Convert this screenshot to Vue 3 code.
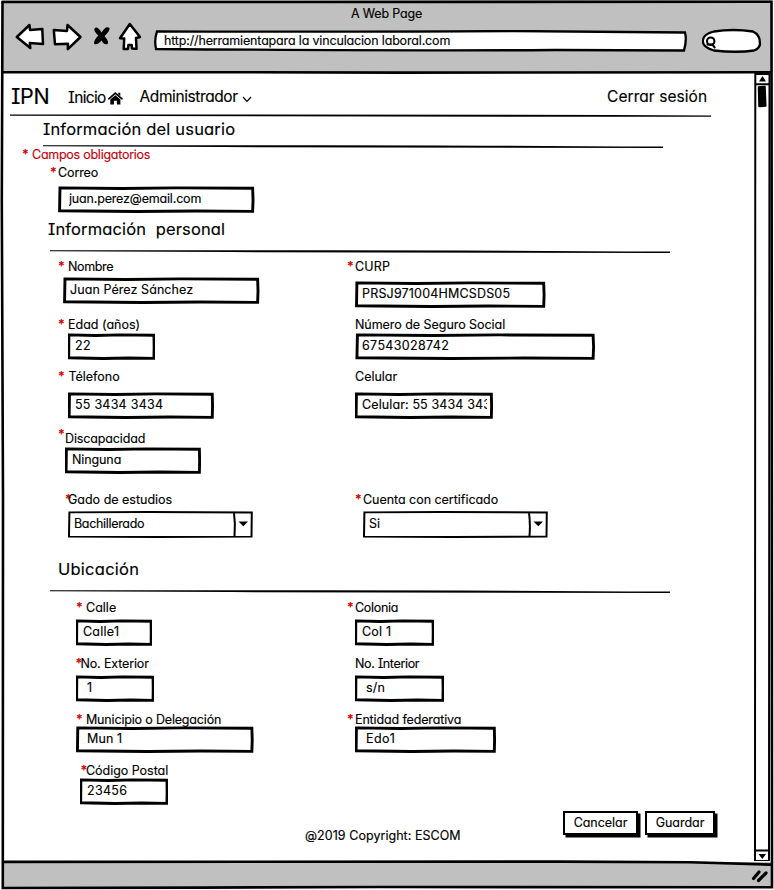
<script setup>
// Spreads letters so that a text takes a given width in the sketch.
const vFit = (el, { value }) => {
  if (!value) return
  el.style.letterSpacing = '0px'
  const count = el.textContent.length
  const natural = el.getBoundingClientRect().width
  el.style.letterSpacing = `${(value - 0.8 - natural) / count}px`
}

// x: left edge of the box, star / lx: offsets of the mark and label, all within the column
const sections = [
  {
    key: 'user', title: 'Información del usuario', titleWidth: 193, note: 'Campos obligatorios',
    rows: [
      { h: 51, fields: [{ label: 'Correo', star: 50, lx: 58, lw: 41, gap: 5, x: 57, w: 198, value: 'juan.perez@email.com', pad: 12, vw: 133 }] },
    ],
  },
  {
    key: 'personal', title: 'Información\u00a0 personal', titleWidth: 178,
    rows: [
      { h: 58, fields: [
        { label: 'Nombre', star: 58, lx: 68, lw: 46, gap: 2, x: 62, w: 198, value: 'Juan Pérez Sánchez', pad: 8, vw: 124 },
        { label: 'CURP', star: 7, lx: 15, lw: 36, gap: 6, x: 14, w: 192, value: 'PRSJ971004HMCSDS05', pad: 8, vw: 149 },
      ] },
      { h: 52, fields: [
        { label: 'Edad (años)', star: 58, lx: 68, lw: 73, gap: 0, x: 67, w: 88, value: '22', pad: 8, vw: 17 },
        { label: 'Número de Seguro Social', lx: 15, lw: 151, gap: 0, x: 14, w: 242, value: '67543028742', pad: 8, vw: 88 },
      ] },
      { h: 62, fields: [
        { label: 'Télefono', star: 58, lx: 68.5, lw: 52, gap: 7, x: 67, w: 147, value: '55 3434 3434', pad: 8, vw: 89 },
        { label: 'Celular', lx: 15, lw: 43, gap: 7, x: 14, w: 139, value: 'Celular: 55 3434 3434', pad: 8, vw: 138 },
      ] },
      { h: 61, fields: [{ label: 'Discapacidad', star: 58, raised: true, lx: 65, lw: 81, gap: 0, x: 64, w: 137, value: 'Ninguna', pad: 8, vw: 50 }] },
      { h: 64, fields: [
        { select: true, label: 'Gado de estudios', star: 65, lx: 68, lw: 105, gap: 3, x: 67, w: 186, value: 'Bachillerado', pad: 7, vw: 71 },
        { select: true, label: 'Cuenta con certificado', star: 15, lx: 23, lw: 136, gap: 3, x: 22, w: 186, value: 'Si', pad: 7, vw: 12 },
      ] },
    ],
  },
  {
    key: 'place', title: 'Ubicación', titleWidth: 82,
    rows: [
      { h: 56, fields: [
        { label: 'Calle', star: 76, lx: 86, lw: 31, gap: 3, x: 75, w: 77, value: 'Calle1', pad: 8, vw: 37 },
        { label: 'Colonia', star: 7, lx: 15, lw: 44, gap: 3, x: 14, w: 80, value: 'Col 1', pad: 8, vw: 30 },
      ] },
      { h: 56, fields: [
        { label: 'No. Exterior', star: 75.5, lx: 80.5, lw: 69, gap: 3, x: 75, w: 79, value: '1', pad: 12, vw: 6 },
        { label: 'No. Interior', lx: 15, lw: 65, gap: 3, x: 14, w: 90, value: 's/n', pad: 12, vw: 20 },
      ] },
      { h: 51, fields: [
        { label: 'Municipio o Delegación', star: 76, lx: 86, lw: 136, gap: -2, x: 75, w: 179, value: 'Mun 1', pad: 12, vw: 36 },
        { label: 'Entidad federativa', star: 7, lx: 15, lw: 107, gap: -2, x: 14, w: 142, value: 'Edo1', pad: 12, vw: 30 },
      ] },
      { h: 44, fields: [{ label: 'Código Postal', star: 80.5, lx: 86, lw: 83, gap: -1, x: 79, w: 89, value: '23456', pad: 8, vw: 41 }] },
    ],
  },
]

const fieldVars = (f) => ({
  '--star': `${f.star ?? 0}px`,
  '--lx': `${f.lx}px`,
  '--gap': `${f.gap}px`,
  '--x': `${f.x}px`,
  '--w': `${f.w}px`,
  '--pad': `${f.pad}px`,
})
</script>

<template>
  <div class="window">
    <header class="chrome">
      <div class="title"><span v-fit="72">A Web Page</span></div>
      <div class="tools">
        <svg class="nav-icons" width="128" height="32" viewBox="15 21 128 32">
          <g fill="#fff" stroke="#000" stroke-width="2.5" stroke-linejoin="round">
            <path d="M16.8 37 L29.5 25 L30 30 L42.3 29 L43 44 L29.8 43 L30.3 48 Z" />
            <path d="M53.8 30 L67 31 L67.5 25 L80.5 37 L67.8 49.2 L68 43.8 L55 44.3 Z" />
            <path d="M129.8 24 L140 37 L136 38 L136.5 48.7 L132 48.5 L131.7 45 L128.4 45 L128 49 L123.7 49 L124.2 38.5 L120 38.2 Z" />
          </g>
          <path d="M94.5 28.5 Q97 25.5 101.6 32.5 Q106 25 109.5 28 Q110 31 104.5 36 Q109.500 42 107.500 44 Q104.500 45.500 101.500 40.500 Q97 45.500 94.300 44 Q93 41 98.300 35.500 Q93.500 31 94.500 28.500 Z" />
        </svg>
        <div class="address">
          <svg class="ink" viewBox="0 0 533 22" preserveAspectRatio="none">
            <path d="M3 1.3 Q200 2 360 1 L530 2.5 Q532 10 529 20.5 L400 20 Q260 21 2 19 Q0 10 3 1.3 Z" fill="#fff" stroke="#000" stroke-width="2.3" />
          </svg>
          <span v-fit="287" class="over">http://herramientapara la vinculacion laboral.com</span>
        </div>
        <svg class="search" width="61" height="27" viewBox="0 0 61 27">
          <path d="M12 3.5 Q31 .5 51 3.5 Q58 7 57.8 14 Q59 20 52 22.5 Q35 25 12 22.5 Q.5 19 .8 13 Q1 6 12 3.5 Z" fill="#fff" stroke="#000" stroke-width="2.3" />
          <circle cx="8.7" cy="13.2" r="3.7" fill="none" stroke="#000" stroke-width="2.1" />
          <path d="M5.5 16.5 L10.5 16.5 L12.6 19.3" fill="none" stroke="#000" stroke-width="2.2" stroke-linecap="round" />
        </svg>
      </div>
    </header>

    <div class="viewport">
      <main class="page">
        <nav class="menu">
          <span class="brand"><span v-fit="39">IPN</span></span>
          <a class="home"><span v-fit="38.5">Inicio</span>
            <svg width="15" height="13" viewBox="0 0 15 13">
              <path d="M.8 6.8 L7.3 1.2 L14 6.8" fill="none" stroke="#000" stroke-width="1.7" stroke-linecap="round" />
              <path d="M10.3 .8 H12.3 V4 L10.3 2.5 Z M2.3 7.4 L7.3 3.2 L12.4 7.4 V12.4 H8.9 V8.8 H5.9 V12.4 H2.3 Z" />
            </svg>
          </a>
          <a class="admin"><span v-fit="99">Administrador</span>
            <svg width="10" height="7" viewBox="0 0 10 7"><path d="M1 1 L5 5.3 L9 1" fill="none" stroke="#000" stroke-width="1.2" /></svg>
          </a>
          <a class="logout"><span v-fit="101">Cerrar sesión</span></a>
        </nav>
        <svg class="rule rule-menu" viewBox="0 0 700 5" preserveAspectRatio="none">
          <path d="M0 .6 Q350 0 701 1.4 V2.8 Q350 2.6 0 1.8 Z" />
        </svg>

        <section v-for="s in sections" :key="s.key" :class="['section', s.key]">
          <h2><span v-fit="s.titleWidth">{{ s.title }}</span></h2>
          <svg class="rule" viewBox="0 0 620 5" preserveAspectRatio="none">
            <path d="M0 1.3 L240 1.2 Q400 1 620 2.6 V4 L330 3.6 L180 3.1 L0 2.3 Z" />
          </svg>
          <p v-if="s.note" class="note"><b>*</b><span v-fit="119">{{ s.note }}</span></p>
          <div v-for="(r, i) in s.rows" :key="i" class="row" :style="{ height: r.h + 'px' }">
            <div v-for="f in r.fields" :key="f.label" class="field" :style="fieldVars(f)">
              <label>
                <b v-if="f.star !== undefined" :class="['star', { raised: f.raised }]">*</b>
                <span v-fit="f.lw" class="over">{{ f.label }}</span>
              </label>
              <div v-if="f.select" class="box select">
                <svg class="ink" viewBox="0 0 186 28" preserveAspectRatio="none">
                  <path d="M2.4 1.4 L80 1 L184.8 1.5 L184.5 26.6 L90 27 L2 26.6 Z M167 2 Q168.5 13 167.5 26" fill="#fff" stroke="#000" stroke-width="2" />
                  <path d="M171.5 10.8 H181 L176.3 15.8 Z" />
                </svg>
                <span v-fit="f.vw" class="over">{{ f.value }}</span>
              </div>
              <div v-else class="box">
                <svg class="ink ink-input" viewBox="0 0 100 27" preserveAspectRatio="none">
                  <path class="edge" d="M1 1.9 L32 2.5 L60 1.9 L98.8 2.3 L99 14 L98.8 25.4 L70 25 L40 25.5 L.8 24.8 Z" />
                </svg>
                <span class="clip"><span v-fit="f.vw">{{ f.value }}</span></span>
              </div>
            </div>
          </div>
        </section>

        <footer class="foot">
          <span class="copyright"><span v-fit="156.5">@2019 Copyright: ESCOM</span></span>
          <button class="btn cancel"><span v-fit="54.500">Cancelar</span></button>
          <button class="btn save"><span v-fit="49.500">Guardar</span></button>
        </footer>
      </main>

      <aside class="scroll">
        <svg width="17" height="788" viewBox="754 74 17 788">
          <g fill="#fff" stroke="#000" stroke-width="2">
            <path d="M755.3 75 L755 862 H769 L769.5 75 Z" />
            <path d="M755 85.3 H769 M755 851.5 H769" />
          </g>
          <path d="M759 82.5 L762.5 77 L766 82.5 Z M758.5 855 H766 L762.3 860 Z" />
          <path d="M758.5 88 L765 87.5 L765.8 107 L759 107.5 Z" stroke="#000" stroke-width="1.5" stroke-linejoin="round" />
        </svg>
      </aside>
    </div>

    <div class="status">
      <svg width="18" height="15" viewBox="0 0 18 15">
        <path d="M2.5 10.500 L8 4 M7.500 12.500 L15 5" stroke="#000" stroke-width="3.2" stroke-linecap="round" />
      </svg>
    </div>

    <svg class="frame" viewBox="0 0 774 890">
      <g fill="none" stroke="#000" stroke-width="2.6">
        <path d="M2.5 2 L300 2 L771.5 1.8 L771.8 400 L772 887.3 L380 887 L200 887.6 L2.8 888 L3 500 L1.8 200 Z" />
        <path d="M2 72.3 L200 72.2 L400 72.6 L771 72.3" />
        <path d="M2 861.9 L560 861.6 L690 862.2 L771 864.6" />
      </g>
    </svg>
  </div>
</template>

<style>
body {
  background: #fff;
}
</style>

<style scoped>
.window {
  position: relative;
  display: flex;
  flex-direction: column;
  width: 774px;
  height: 890px;
  overflow: hidden;
  color: #000;
  font: 400 12.5px/16px Inter, Lato, sans-serif;
  font-feature-settings: 'cv11', 'cv08', 'calt' 0;
  -webkit-text-stroke: 0.15px currentColor;
}
.window span {
  white-space: nowrap;
}
.frame {
  position: absolute;
  inset: 0;
  pointer-events: none;
}
.chrome {
  height: 73px;
  flex: none;
  margin: 0 2px;
  background: #c0c0c0;
}
.title {
  padding: 6px 0 0 349px;
}
.tools {
  display: flex;
  height: 32px;
  margin-top: -1px;
  padding-left: 13px;
}
.nav-icons {
  flex: none;
}
.address {
  position: relative;
  width: 534px;
  height: 22px;
  flex: none;
  margin: 9px 0 0 11px;
  padding: 3px 0 0 10px;
  box-sizing: border-box;
}
.search {
  margin: 7px 0 0 14px;
}
.ink {
  position: absolute;
  inset: 0;
  width: 100%;
  height: 100%;
}
.ink-input {
  left: 1px;
  top: -0.5px;
  width: calc(100% - 1px);
}
.over {
  position: relative;
}
.viewport {
  display: flex;
  height: 789px;
  flex: none;
}
.page {
  width: 754px;
  flex: none;
}
.menu {
  display: flex;
  height: 41px;
  padding-left: 11px;
  box-sizing: border-box;
  font-size: 15.5px;
  line-height: 20px;
}
.brand {
  width: 57px;
  padding-top: 13px;
  font-size: 21.5px;
}
.home {
  display: flex;
  width: 71.5px;
  padding-top: 15px;
}
.home svg {
  margin: 4px 0 0 2px;
}
.admin {
  display: flex;
  width: 467.5px;
  padding-top: 14px;
}
.admin svg {
  margin: 9px 0 0 4px;
}
.logout {
  padding-top: 14px;
}
.rule {
  display: block;
  width: 620px;
  height: 5px;
  margin-left: 50px;
}
.rule-menu {
  width: 701px;
  height: 5px;
  margin: 0 0 -3px 10px;
}
h2 {
  margin: 0;
  font-size: 16.5px;
  font-weight: 400;
  line-height: 26px;
}
.user h2 {
  padding: 0 0 2px 43px;
}
.user .rule {
  margin-left: 43px;
}
.personal h2 {
  padding: 0 0 7px 48px;
}
.place h2 {
  padding: 0 0 7px 58px;
}
.personal .rule {
  margin-bottom: 5px;
}
.place .rule {
  margin-bottom: 6px;
}
.note {
  height: 16px;
  margin: 0;
  padding-left: 22px;
  color: #c8000a;
  line-height: 12px;
}
.note b {
  display: inline-block;
  width: 10px;
  font-weight: 600;
}
.row {
  display: grid;
  grid-template-columns: 340px 1fr;
}
label {
  position: relative;
  display: block;
  height: 16px;
  padding-left: var(--lx);
}
.star {
  position: absolute;
  left: var(--star);
  top: 0;
  color: #d00000;
  font-weight: 600;
}
.raised {
  top: -4px;
}
.box {
  position: relative;
  width: var(--w);
  height: 27px;
  margin: var(--gap) 0 0 var(--x);
  padding: 5px 6px 0 var(--pad);
  box-sizing: border-box;
}
.edge {
  fill: #fff;
  stroke: #000;
  stroke-width: 2.9px;
  vector-effect: non-scaling-stroke;
}
.clip {
  position: relative;
  display: block;
  overflow: hidden;
}
.foot {
  display: flex;
  padding-left: 305px;
}
.copyright {
  width: 258px;
  padding-top: 21px;
}
.btn {
  height: 24px;
  margin: 4px 0 0;
  padding: 0 0 1px;
  border: 2px solid #000;
  background: #fff;
  box-shadow: 2.5px 2.5px 0 #000;
  color: #000;
  font: inherit;
  font-feature-settings: inherit;
}
.cancel {
  width: 75px;
}
.save {
  width: 70px;
  margin-left: 7px;
}
.scroll {
  flex: none;
}
.status {
  display: flex;
  height: 26px;
  flex: none;
  justify-content: flex-end;
  margin: 0 2px;
  padding: 6px 3px 0 0;
  box-sizing: border-box;
  background: #c0c0c0;
}
</style>
